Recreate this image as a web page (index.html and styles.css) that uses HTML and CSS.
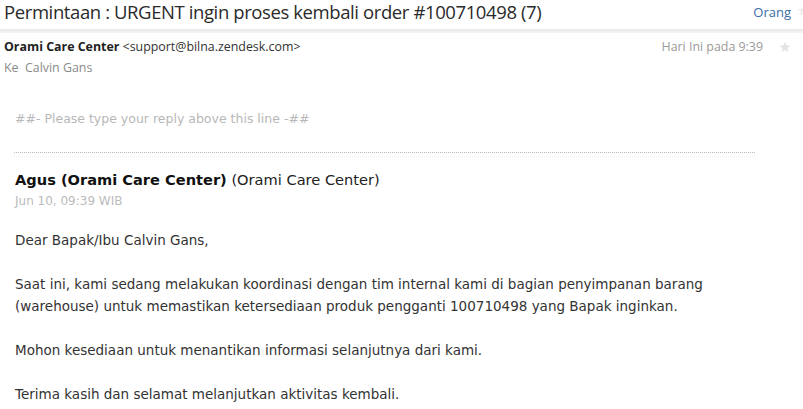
FILE: index.html
```html
<!DOCTYPE html>
<html>
<head>
<meta charset="utf-8">
<link rel="stylesheet" href="styles.css">
</head>
<body>
<div class="page">
  <header class="subject-bar">
    <h1 class="subject">Permintaan : URGENT ingin proses kembali order #100710498 (7)</h1>
    <div class="subject-actions">
      <a class="people">Orang</a>
      <svg class="star-icon star-top" width="13" height="13" viewBox="0 0 24 24"><path d="M12 1.5l3.1 7.2 7.8.7-5.9 5.2 1.8 7.7L12 18.2l-6.8 4.1 1.8-7.7L1.1 9.4l7.8-.7z"/></svg>
    </div>
  </header>
  <div class="divider"></div>
  <div class="meta">
    <div class="from-row">
      <div class="from"><b>Orami Care Center</b> <span class="addr">&lt;support@bilna.zendesk.com&gt;</span></div>
      <div class="when">Hari Ini pada 9:39 <svg class="star-icon" width="12" height="12" viewBox="0 0 24 24"><path d="M12 1.5l3.1 7.2 7.8.7-5.9 5.2 1.8 7.7L12 18.2l-6.8 4.1 1.8-7.7L1.1 9.4l7.8-.7z"/></svg></div>
    </div>
    <div class="to">Ke&nbsp; Calvin Gans</div>
  </div>
  <div class="mail">
    <p class="reply-line">##- Please type your reply above this line -##</p>
    <div class="dotted"></div>
    <div class="author"><b>Agus (Orami Care Center)</b> (Orami Care Center)</div>
    <div class="date">Jun 10, 09:39 WIB</div>
    <div class="content">
      <p>Dear Bapak/Ibu Calvin Gans,</p>
      <p>Saat ini, kami sedang melakukan koordinasi dengan tim internal kami di bagian penyimpanan barang<br>(warehouse) untuk memastikan ketersediaan produk pengganti 100710498 yang Bapak inginkan.</p>
      <p>Mohon kesediaan untuk menantikan informasi selanjutnya dari kami.</p>
      <p>Terima kasih dan selamat melanjutkan aktivitas kembali.</p>
    </div>
  </div>
</div>
</body>
</html>
```
FILE: styles.css
```css
html, body { margin: 0; padding: 0; background: #fff; }
body { width: 803px; height: 409px; overflow: hidden; font-family: "Open Sans", "Noto Sans", sans-serif; }
.page { display: flex; flex-direction: column; }
.subject-bar { display: flex; justify-content: space-between; align-items: flex-start; height: 29px; }
.subject { margin: 0; padding: 0 0 0 4px; font-weight: 400; font-size: 18.5px; line-height: 24px; color: #2a2a2a; white-space: nowrap; letter-spacing: -0.4px; }
.subject-actions { display: flex; align-items: center; gap: 6px; margin-top: 3px; margin-right: -7px; }
.people { color: #3a6ea8; font-size: 13px; line-height: 18px; }
.star-icon { fill: #e4e4e4; display: block; }
.star-top { fill: #eeeeee; margin-top: -4px; }
.divider { height: 4px; background: linear-gradient(#e8e8e8, #f4f4f4); }
.meta { padding: 5px 4px 0 4px; font-size: 12.4px; }
.from-row { display: flex; justify-content: space-between; line-height: 18px; }
.from { color: #222; }
.from b { font-weight: 700; }
.addr { color: #333; }
.when { color: #9a9a9a; display: flex; align-items: center; gap: 16px; padding-right: 8px; }
.to { color: #8a8a8a; line-height: 18px; margin-top: 3px; }
.mail { padding: 33px 0 0 15px; font-family: "DejaVu Sans", Verdana, sans-serif; color: #333; }
.reply-line { margin: 0; color: #b8b8b8; font-size: 12.5px; line-height: 18px; }
.dotted { width: 741px; margin: 24px 0 0 -1px; border-top: 1px dotted #b9b9b9; height: 3px; border-bottom: 1px dotted #f1f1f1; }
.author { margin-top: 13px; font-size: 14.6px; line-height: 20px; color: #222; }
.author b { font-weight: 700; color: #111; }
.date { margin-top: 3px; font-size: 12px; line-height: 16px; color: #bbb; }
.content { margin-top: 20px; font-size: 13.5px; line-height: 22px; }
.content p { margin: 0 0 22px 0; }
```
